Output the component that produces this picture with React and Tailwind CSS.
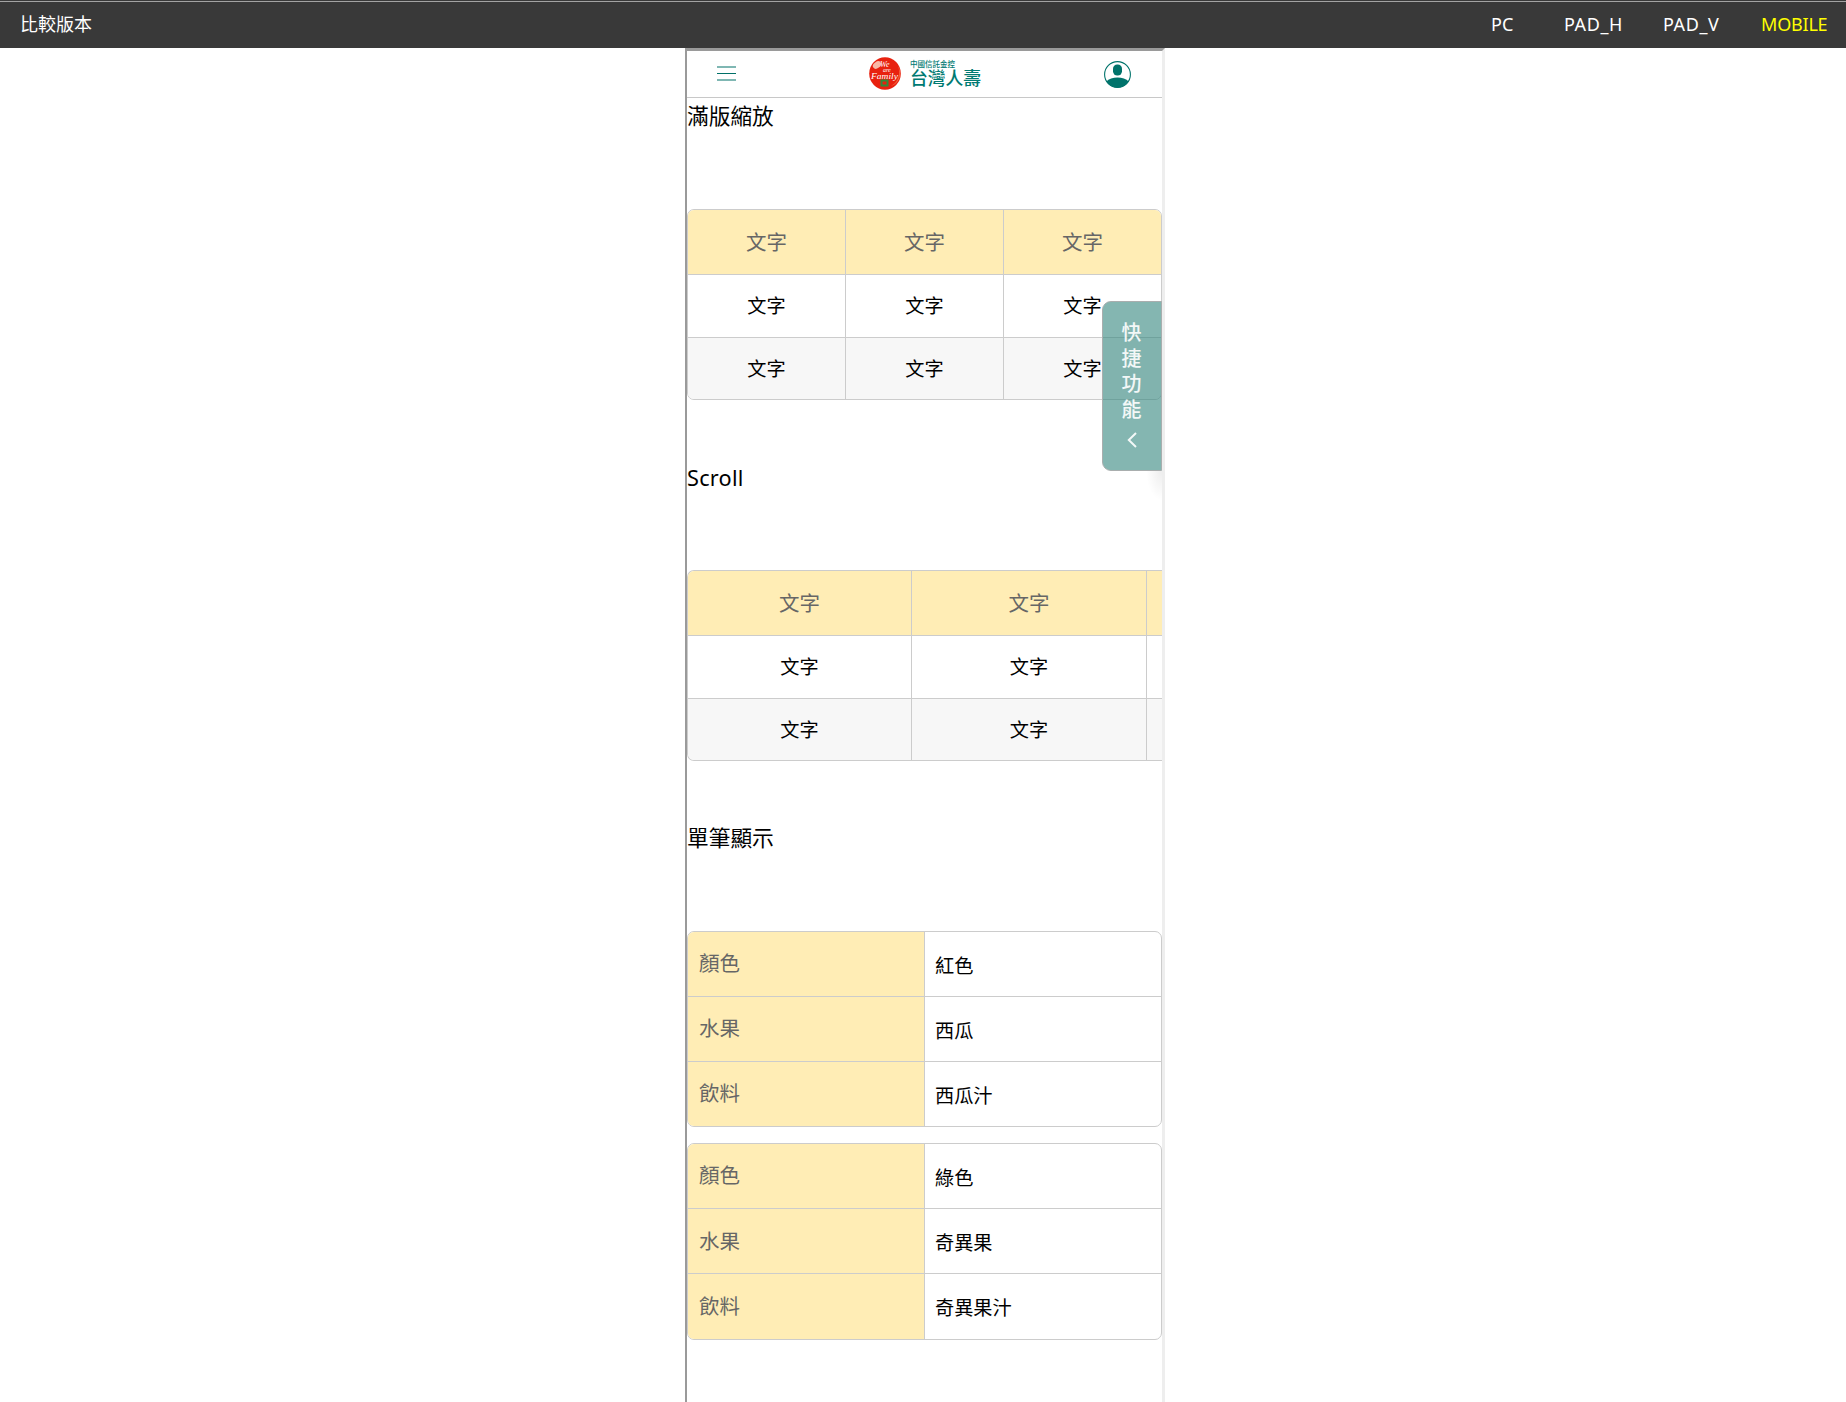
const cjk = "[font-family:'Noto_Sans','Noto_Sans_CJK_TC',sans-serif]";

function NavItem({ className, children }) {
  return <a className={`block whitespace-nowrap ${className}`}>{children}</a>;
}

function TopBar() {
  return (
    <nav className="flex h-12 items-center bg-[#393939] pl-[20px] text-[18px] leading-[47px] text-white shadow-[inset_0_1px_0_#393939,inset_0_2px_0_#a3a3a3]">
      <div>比較版本</div>
      <div className="ml-auto flex">
        <NavItem className="w-[73px] tracking-[0.2px]">PC</NavItem>
        <NavItem className="w-[99px] tracking-[0.6px]">PAD_H</NavItem>
        <NavItem className="w-[98px] tracking-[0.6px]">PAD_V</NavItem>
        <NavItem className="w-[85px] tracking-[-0.2px] text-[#ffff00]">MOBILE</NavItem>
      </div>
    </nav>
  );
}

function Logo() {
  return (
    <div className="flex items-center pb-[2px]">
      <svg className="-ml-px" width="32" height="33" viewBox="0 0 32 33">
        <ellipse cx="16" cy="16.500" rx="15.800" ry="16.200" fill="#e8210f" />
        <path d="M29 9c3 8 0 16-7 20 8-2 12-12 7-20z" fill="#f4603c" />
        <ellipse cx="8" cy="8" rx="4.500" ry="3.200" fill="#f8b9a6" transform="rotate(-35 8 8)" />
        <rect x="12.500" y="23.500" width="6" height="5" fill="none" stroke="#2f8a3b" strokeWidth="2" />
        <g fill="#fff" fontFamily="Liberation Serif" fontStyle="italic">
          <text x="11" y="9.500" fontSize="8">We</text>
          <text x="14" y="14.700" fontSize="6">are</text>
          <text x="2" y="21.500" fontSize="9" textLength="27" lengthAdjust="spacingAndGlyphs">Family</text>
        </g>
      </svg>
      <div className="ml-[9px] text-[#007a72]">
        <div className="h-[10px] text-[7.500px] leading-[11px] font-medium whitespace-nowrap">中國信託金控</div>
        <div className="text-[17.800px] leading-[18px] font-medium whitespace-nowrap">台灣人壽</div>
      </div>
    </div>
  );
}

function Header() {
  return (
    <header className="flex h-[47px] items-center border-b border-[#c8c8c8] pr-[31px] pl-[30px]">
      <svg className="mb-px" width="19" height="16" viewBox="0 0 19 16" stroke="#007068" strokeWidth="1.200">
        <path d="M0 1h19M0 7.500h19M0 14h19" />
      </svg>
      <div className="ml-[134px]"><Logo /></div>
      <svg className="ml-auto" width="27" height="27" viewBox="0 0 27 27">
        <circle cx="13.500" cy="13.500" r="12.900" fill="#fff" stroke="#00736b" strokeWidth="1.100" />
        <rect x="9" y="3.500" width="9" height="11" rx="4.200" fill="#00736b" />
        <path d="M2.300 20.500C7 15 20 15 24.700 20.500A13.200 13.200 0 0 1 2.300 20.500z" fill="#00736b" />
      </svg>
    </header>
  );
}

function Heading({ className, children }) {
  return <h2 className={`h-[38px] text-[21.700px] whitespace-nowrap ${className}`}>{children}</h2>;
}

const gridRows = [
  { row: "h-[65px] border-b bg-[#ffedb5] text-[20.500px] text-[#666]", cell: "" },
  { row: "h-[63px] border-b text-[19.200px]", cell: "" },
  { row: "h-[61px] bg-[#f7f7f7] text-[19.200px]", cell: "pt-[2px]" },
];

function Grid({ cols, labels, className }) {
  return (
    <div className={`overflow-hidden border border-[#ccc] ${className}`}>
      {gridRows.map(({ row, cell }, r) => (
        <div key={r} className={`grid border-[#ccc] ${cols} ${row}`}>
          {labels.map((label, c) => (
            <div key={c} className={`flex items-center justify-center border-r border-[#ccc] last:border-r-0 ${cell}`}>{label}</div>
          ))}
        </div>
      ))}
    </div>
  );
}

function Card({ rows }) {
  return (
    <dl className="overflow-hidden rounded-[7px] border border-[#ccc]">
      {rows.map(([k, v]) => (
        <div key={k} className="grid h-[65.100px] grid-cols-[237px_1fr] border-b border-[#ccc] last:h-[64.100px] last:border-b-0">
          <dt className="flex items-center border-r border-[#ccc] bg-[#ffedb5] pb-px pl-[11px] text-[20.500px] text-[#666]">{k}</dt>
          <dd className="flex items-center pt-1 pl-[10px] text-[19.200px]">{v}</dd>
        </div>
      ))}
    </dl>
  );
}

function QuickMenu() {
  return (
    <div className="absolute top-[250px] right-0 h-[200px] w-[76px] overflow-hidden pl-4">
      <div className="flex h-[170px] w-[60px] flex-col items-center rounded-l-[9px] border border-[#a9aeae] bg-[#32857d99] pt-[18px] pr-px text-[20px] leading-[25.600px] font-medium text-white/90">
        <span>快</span>
        <span>捷</span>
        <span>功</span>
        <span>能</span>
        <svg className="mt-[10px] shrink-0" width="10" height="16" viewBox="0 0 10 16" fill="none" stroke="#fff" strokeOpacity=".9" strokeWidth="2">
          <path d="M9 1L1.800 8L9 15" />
        </svg>
      </div>
      <div className="ml-auto h-[30px] w-4 bg-[radial-gradient(ellipse_at_top_right,#00000012,transparent_70%)]" />
    </div>
  );
}

export default function App() {
  return (
    <div className={`h-[1402px] overflow-hidden bg-white text-black ${cjk}`} lang="zh-TW">
      <TopBar />
      <main className="ml-[685px] h-[1354px] w-[480px] border-t-[3px] border-r-[3px] border-l-2 border-t-[#9a9a9a] border-r-[#eee] border-l-[#9a9a9a]">
        <div className="relative h-full">
          <Header />
          <Heading className="leading-[36px]">滿版縮放</Heading>
          <Grid className="mt-[73px] rounded-[7px]" cols="grid-cols-[158px_158px_1fr]" labels={["文字", "文字", "文字"]} />
          <div className="mt-[59px]"><Heading className="leading-[37px] tracking-[0.25px]">Scroll</Heading></div>
          <Grid className="mt-[73px] rounded-l-[7px] border-r-0" cols="grid-cols-[224px_235px_1fr]" labels={["文字", "文字", ""]} />
          <div className="mt-[59px]"><Heading className="leading-[36px]">單筆顯示</Heading></div>
          <div className="mt-[73px] flex flex-col gap-4">
            <Card rows={[["顏色", "紅色"], ["水果", "西瓜"], ["飲料", "西瓜汁"]]} />
            <Card rows={[["顏色", "綠色"], ["水果", "奇異果"], ["飲料", "奇異果汁"]]} />
          </div>
          <QuickMenu />
        </div>
      </main>
    </div>
  );
}
